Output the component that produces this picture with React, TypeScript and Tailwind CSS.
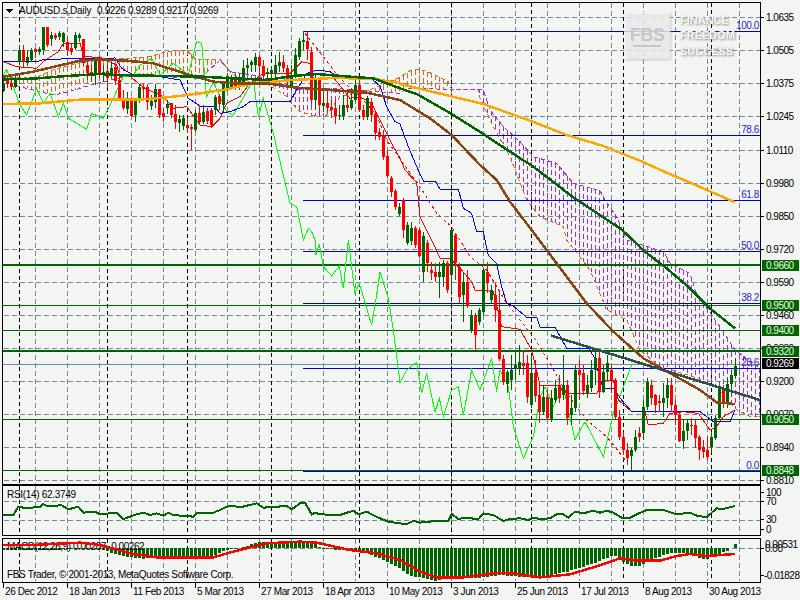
import React from 'react';

type Pt = number[];

// traced from 3x crops: ox/oy is the crop origin
const trace = (ox: number, oy: number, s: string): Pt[] =>
  s.trim().split(/\s+/).map((p) => {
    const [a, b] = p.split(',').map(Number);
    return [ox + a / 3, oy + b / 3];
  });
const pts = (l: Pt[]) => l.map((p) => p.join(',')).join(' ');
const yAt = (l: Pt[], x: number) => {
  if (x <= l[0][0]) return l[0][1];
  for (let i = 1; i < l.length; i++) {
    if (x <= l[i][0]) {
      const [x0, y0] = l[i - 1];
      const [x1, y1] = l[i];
      return y0 + ((y1 - y0) * (x - x0)) / (x1 - x0 || 1);
    }
  }
  return l[l.length - 1][1];
};

const orangeMa = trace(0, 0, '10,312 120,310 250,298 350,298 430,298 520,290 600,280 680,268 760,250 880,240 1000,234 1120,236 1200,250').concat(
  trace(400, 0, '0,252 150,288 250,312 390,362 500,405 610,438 720,482 800,518 880,552 1005,607'),
);
const greenMa = trace(0, 0, '10,238 100,236 200,228 300,222 350,225 500,228 600,230 700,235 800,240 880,228 950,222 1050,230 1120,235 1200,265').concat(
  trace(400, 0, '50,282 155,342 250,402 330,455 400,500 520,592 660,685 690,712'),
  trace(400, 240, '735,35 800,85 870,145 930,205 1005,265'),
);
const brownMa = trace(0, 0, '10,230 100,215 240,182 300,178 380,182 460,190 560,222 640,245 700,250 800,250 880,262 960,268 1100,278 1200,300').concat(
  trace(400, 0, '90,355 155,405 240,495 290,540 330,605 410,710'),
  trace(400, 240, '470,70 560,190 640,275 730,355 820,405 900,450 950,487 1005,492'),
);
const lime = trace(0, 0, '10,225 20,208 30,235 60,315 80,345 110,265 130,310 150,280 175,350 190,310 205,355 260,388 275,340 310,355 340,295 370,230 400,225 420,195 455,175 480,225 520,190 565,225 590,125 605,130 620,290 640,245 680,335 700,345 760,240 775,350 790,295 820,400 870,610 890,620 910,720 925,685 935,695 945,720').concat(
  trace(0, 240, '948,45 958,12 970,80 995,108 1018,78 1030,145 1045,0 1065,160 1078,130 1115,255 1130,165 1140,95 1165,175 1180,270 1200,430'),
  trace(400, 240, '20,390 50,367 65,460 80,400 105,515 118,475 130,530 155,450 175,440 190,525 215,390 240,450 275,355 290,455 300,390 325,440 340,560 370,655 400,590 420,470 435,440 460,500 490,440 525,600 555,545 610,650 640,520 655,480 695,375'),
);
const blue = trace(0, 0, '10,184 115,184 130,178 345,174 365,205 400,225 480,230 540,240 565,295 600,318 645,318 660,340 690,335 730,320 750,305 870,305 890,270 920,220 950,210 990,215 1020,232 1110,232 1140,258 1160,320 1185,365 1200,372').concat(
  trace(400, 0, '25,440 50,500 70,543 105,543 120,567 175,567 190,625 215,640 230,695 250,695 255,720'),
  trace(400, 240, '265,45 290,72 305,140 320,190 340,198 380,232 410,232 420,262 465,262 500,325 565,325 585,355 590,380 610,445 640,445 665,480 695,515 900,515 940,545 990,545 1005,510'),
);
const red = trace(0, 0, '10,185 50,200 110,205 130,185 175,155 190,130 240,130 250,170 300,172 350,195 360,230 385,225 430,262 490,290 520,325 560,320 600,375 635,380 660,355 680,310 720,290 750,250 790,220 870,220 905,185 930,190 940,235 1000,232 1050,295 1080,290 1115,310 1150,380 1180,440 1200,475').concat(
  trace(400, 0, '15,510 50,548 60,650 95,720'),
  trace(400, 240, '120,55 150,55 180,85 215,125 225,150 250,150 280,155 305,260 360,268 395,330 420,435 470,435 500,460 590,460 610,420 640,420 655,480 695,515 735,515 745,555 790,550 810,520 850,515 895,520 930,570 950,560 970,530 1005,510'),
);
const redDash = trace(0, 0, '915,100 970,170 1020,235 1090,300 1130,345 1160,420 1195,470').concat(
  trace(400, 0, '60,560 110,640 155,680'),
  trace(400, 240, '210,50 260,90 320,190 400,290 450,370 500,460 560,540 620,590 680,665'),
);
const spanA = trace(0, 0, '10,230 100,235 160,210 230,190 300,180 450,170 500,155 560,150 590,180 660,178 690,215 720,240 800,250 860,290 875,310 900,335 950,350 980,345 1020,290 1060,280 1110,270').concat(
  trace(400, 0, '0,232 30,212 60,208 100,222 145,245 155,268 235,268 240,295 280,380 330,470 380,600 420,650 490,680 500,720'),
  trace(400, 240, '570,90 620,210 680,240 720,330 780,380 880,410 950,440 1010,510 1050,530 1080,530'),
);
const spanB = trace(0, 0, '10,240 60,260 160,285 190,280 290,250 400,225 600,235 660,180 690,215 760,225 860,255 890,268 1000,265 1200,280').concat(
  trace(400, 0, '20,265 155,268 240,268 250,270 270,330 310,380 360,425 400,470 470,490 520,550 600,572 615,600 650,650 680,720'),
  trace(400, 240, '790,35 810,70 870,100 885,150 900,175 970,275 1005,330 1080,385'),
);
const rsi = trace(0, 470, '10,135 40,135 55,110 80,115 120,110 130,102 140,108 185,106 205,118 235,110 250,128 285,125 300,133 350,128 370,147 410,133 430,128 450,135 470,130 490,137 505,128 520,135 580,140 590,130 640,128 660,120 680,110 700,108 720,112 770,100 790,113 860,108 875,118 900,100 915,98 925,115 935,133 945,128 960,133 1020,135 1060,122 1075,133 1100,125 1135,143 1165,155 1200,160').concat(
  trace(400, 470, '20,163 40,152 60,158 80,155 130,153 145,152 155,132 175,147 200,143 235,148 250,130 280,135 310,153 330,147 360,145 385,150 400,143 420,147 450,145 470,133 490,133 505,143 525,125 550,130 580,122 600,128 620,122 640,128 665,143 690,143 710,133 740,120 790,120 830,133 870,128 890,137 920,142 950,115 970,117 1005,108'),
);
const histo = trace(0, 470, '10,240 110,240 300,236 340,250 380,260 430,266 470,262 560,265 640,256 680,240 720,233 770,218 800,215 900,214 950,220 960,235 1020,240 1100,250 1150,270 1200,295').concat(
  trace(400, 470, '30,318 60,322 105,332 150,325 230,325 300,315 380,322 420,320 500,305 580,280 640,255 665,275 690,288 720,288 750,270 810,248 860,250 915,270 950,255 990,238 1005,222'),
);
const signal = trace(0, 470, '10,225 100,225 240,218 300,225 400,252 470,262 640,262 700,245 800,220 900,215 950,218 1050,240 1130,250 1200,270').concat(
  trace(400, 470, '60,305 110,322 190,322 300,308 350,312 420,322 510,313 580,292 660,265 720,272 780,272 830,258 870,252 920,258 1005,252'),
);

// kind, body top, body bottom, high, low (pixels)
const candles: [string, number, number, number, number][] = [
  ['g', 84, 91, 79, 92], ['r', 80, 84, 76, 88], ['r', 83, 87, 80, 90], ['g', 78, 87, 76, 88], ['g', 50, 62, 45, 65], ['r', 50, 62, 45, 68], ['g', 57, 63, 50, 66], ['g', 50, 60, 48, 62],
  ['r', 49, 52, 48, 58], ['g', 49, 52, 47, 55], ['g', 27, 50, 27, 55], ['r', 27, 45, 27, 47], ['g', 35, 39, 32, 46], ['r', 35, 38, 33, 40], ['g', 33, 37, 31, 40], ['g', 33, 42, 32, 47],
  ['r', 42, 50, 37, 56], ['r', 48, 52, 43, 55], ['g', 35, 48, 32, 50], ['g', 35, 38, 33, 42], ['r', 39, 63, 39, 66], ['r', 65, 73, 60, 80], ['r', 72, 75, 65, 82], ['g', 58, 73, 58, 85],
  ['r', 58, 73, 56, 78], ['g', 72, 75, 65, 82], ['r', 71, 78, 58, 88], ['g', 68, 75, 62, 78], ['r', 67, 81, 65, 85], ['r', 80, 99, 76, 100], ['r', 98, 108, 90, 110], ['g', 98, 109, 92, 114],
  ['r', 99, 116, 97, 117], ['g', 100, 115, 100, 122], ['g', 87, 100, 84, 103], ['r', 87, 89, 83, 100], ['r', 87, 102, 84, 110], ['g', 101, 106, 95, 110], ['g', 89, 102, 84, 108], ['r', 89, 115, 89, 118],
  ['r', 113, 117, 108, 122], ['g', 104, 108, 100, 114], ['r', 103, 115, 103, 118], ['r', 114, 122, 105, 129], ['g', 119, 123, 115, 132], ['g', 118, 126, 115, 130], ['r', 125, 128, 118, 133], ['r', 127, 129, 124, 150],
  ['g', 113, 130, 110, 132], ['r', 113, 122, 105, 125], ['g', 112, 122, 105, 124], ['r', 111, 121, 108, 124], ['r', 110, 125, 108, 128], ['g', 97, 110, 95, 115], ['r', 96, 104, 94, 110], ['g', 82, 105, 82, 112],
  ['g', 76, 89, 73, 91], ['g', 77, 87, 75, 90], ['r', 77, 87, 75, 90], ['g', 80, 87, 73, 90], ['g', 68, 83, 60, 86], ['g', 65, 68, 58, 74], ['g', 62, 65, 60, 72], ['g', 57, 65, 53, 72],
  ['r', 57, 66, 55, 76], ['r', 66, 76, 60, 85], ['g', 72, 74, 68, 80], ['g', 70, 73, 66, 78], ['g', 65, 73, 55, 78], ['g', 62, 66, 52, 72], ['r', 62, 68, 55, 72], ['r', 68, 80, 65, 85],
  ['g', 75, 88, 65, 90], ['g', 55, 76, 48, 78], ['g', 41, 57, 38, 60], ['g', 40, 42, 31, 50], ['r', 41, 49, 31, 60], ['r', 52, 100, 47, 105], ['g', 80, 100, 75, 110], ['r', 80, 105, 78, 115],
  ['g', 103, 106, 88, 112], ['r', 103, 108, 90, 113], ['r', 107, 110, 100, 118], ['r', 108, 116, 100, 124], ['g', 115, 116, 105, 120], ['g', 105, 116, 95, 120], ['r', 105, 108, 90, 112], ['g', 100, 108, 90, 110],
  ['g', 85, 100, 80, 102], ['r', 85, 110, 80, 112], ['r', 110, 117, 105, 120], ['g', 98, 117, 96, 120], ['r', 102, 115, 98, 122], ['r', 114, 133, 112, 140], ['r', 132, 137, 128, 140], ['r', 135, 157, 130, 160],
  ['r', 156, 176, 150, 178], ['r', 178, 192, 176, 197], ['r', 191, 207, 189, 210], ['g', 207, 214, 203, 216],
  ['r', 200, 230, 198, 238], ['g', 225, 243, 222, 245], ['g', 228, 241, 222, 245], ['r', 228, 245, 226, 248], ['r', 230, 256, 228, 258], ['g', 236, 272, 232, 282], ['r', 243, 263, 240, 272], ['r', 270, 273, 262, 280],
  ['r', 272, 277, 263, 282], ['g', 272, 277, 262, 298], ['g', 263, 277, 260, 287], ['r', 263, 290, 261, 293], ['g', 230, 275, 230, 292], ['r', 235, 263, 233, 280], ['r', 267, 297, 263, 303], ['g', 282, 295, 273, 322],
  ['r', 282, 306, 270, 308], ['g', 315, 330, 310, 333], ['r', 315, 335, 313, 350], ['g', 310, 322, 308, 325], ['g', 270, 312, 268, 315], ['r', 272, 283, 262, 293], ['g', 290, 300, 285, 303], ['r', 295, 310, 283, 322],
  ['r', 310, 359, 292, 361], ['r', 359, 382, 355, 385], ['g', 372, 384, 370, 393], ['g', 370, 380, 355, 390], ['g', 365, 369, 352, 380], ['g', 362, 369, 345, 375], ['r', 363, 366, 350, 375], ['r', 363, 397, 355, 403],
  ['g', 373, 405, 355, 408], ['r', 373, 396, 360, 402], ['r', 395, 412, 385, 423], ['g', 397, 412, 385, 415], ['r', 397, 418, 390, 420], ['g', 398, 420, 390, 422], ['g', 388, 400, 380, 403], ['r', 385, 398, 375, 403],
  ['g', 385, 395, 355, 400], ['r', 385, 418, 380, 425], ['g', 408, 415, 395, 425], ['g', 370, 408, 365, 412], ['r', 370, 375, 360, 400], ['r', 373, 391, 365, 395], ['g', 385, 393, 375, 398], ['g', 370, 388, 360, 392],
  ['g', 358, 370, 350, 385], ['r', 358, 392, 350, 398], ['g', 372, 392, 365, 393], ['g', 363, 372, 355, 380], ['r', 370, 380, 365, 393], ['r', 380, 417, 378, 420], ['r', 417, 437, 410, 440], ['r', 437, 450, 432, 455],
  ['r', 450, 458, 443, 465], ['g', 450, 456, 448, 470], ['g', 437, 450, 430, 452], ['r', 433, 437, 427, 442], ['g', 407, 433, 400, 440], ['g', 382, 407, 378, 410], ['r', 385, 398, 380, 405], ['r', 395, 405, 394, 413],
  ['r', 401, 403, 395, 412], ['g', 398, 403, 383, 417], ['g', 385, 398, 378, 408], ['r', 385, 405, 378, 412], ['r', 405, 415, 400, 425], ['r', 415, 441, 412, 442], ['g', 431, 441, 420, 449], ['g', 423, 431, 420, 440],
  ['r', 425, 426, 418, 435], ['r', 425, 438, 420, 448], ['r', 437, 450, 435, 460], ['r', 447, 452, 440, 458], ['r', 450, 457, 437, 460], ['g', 437, 447, 432, 452], ['g', 418, 438, 415, 440], ['g', 388, 418, 385, 420],
  ['r', 388, 403, 385, 408], ['g', 384, 403, 378, 408], ['g', 375, 384, 370, 395], ['g', 366, 376, 358, 378],
];

const grayX = Array.from({ length: 23 }, (_, i) => 35 + i * 32);
const blackX = [19, 107, 187, 271, 359, 451, 531, 623, 711];
const grayY = [17, 50, 83, 116, 150, 183, 216, 249, 282, 315, 348, 381, 414, 447, 480];
const hatchX = Array.from({ length: 190 }, (_, i) => 3 + i * 4);

const priceTicks = [
  ['1.0635', 17], ['1.0505', 50], ['1.0375', 83], ['1.0245', 116], ['1.0110', 150], ['0.9980', 183], ['0.9850', 216], ['0.9720', 249],
  ['0.9590', 282], ['0.9460', 315], ['0.9330', 348], ['0.9200', 381], ['0.9070', 414], ['0.8940', 447], ['0.8810', 480],
] as const;
const levels = [
  ['0.9660', 265, 2], ['0.9500', 305, 1], ['0.9400', 330, 1], ['0.9320', 351, 2], ['0.9050', 419, 1], ['0.8848', 470, 1],
] as const;
const fibs = [
  ['100.0', 31], ['78.6', 135], ['61.8', 200], ['50.0', 251], ['38.2', 303], ['23.6', 368], ['0.0', 471],
] as const;
const dates = ['26 Dec 2012', '18 Jan 2013', '11 Feb 2013', '5 Mar 2013', '27 Mar 2013', '18 Apr 2013', '10 May 2013', '3 Jun 2013', '25 Jun 2013', '17 Jul 2013', '8 Aug 2013', '30 Aug 2013'];

const label = 'text-[10px] tracking-[-0.5px] fill-black';

function Grid({ top, bottom }: { top: number; bottom: number }) {
  return (
    <g>
      {grayX.map((x) => (
        <line key={x} x1={x + 0.5} x2={x + 0.5} y1={top} y2={bottom} stroke="#778899" strokeDasharray="5 3" />
      ))}
      {blackX.map((x) => (
        <line key={x} x1={x + 0.5} x2={x + 0.5} y1={top} y2={bottom} stroke="#000" strokeDasharray="4 3" />
      ))}
    </g>
  );
}

function PriceChart() {
  return (
    <svg viewBox="3 3 757 481" className="block w-[757px] h-[481px]" shapeRendering="crispEdges">
      {grayY.map((y) => (
        <line key={y} x1={4} x2={760} y1={y + 0.5} y2={y + 0.5} stroke="#778899" strokeDasharray="5 3" />
      ))}
      <Grid top={3} bottom={484} />

      {/* cloud hatching, colour flips where the spans cross */}
      {hatchX.map((x) => {
        const a = yAt(spanA, x);
        const b = yAt(spanB, x);
        const y1 = Math.round(Math.min(a, b));
        const y2 = Math.round(Math.max(a, b));
        if (y2 - y1 < 3) return null;
        return (
          <line key={x} x1={x + 0.5} x2={x + 0.5} y1={y1} y2={y2} stroke={a < b ? '#d2691e' : '#9932cc'} strokeDasharray="5 3" />
        );
      })}
      <polyline points={pts(spanA)} fill="none" stroke="#d2691e" strokeDasharray="4 3" />
      <polyline points={pts(spanB)} fill="none" stroke="#9932cc" strokeDasharray="4 3" />

      {levels.map(([t, y, w]) => (
        <line key={t} x1={3} x2={760} y1={y + (w === 1 ? 0.5 : 0)} y2={y + (w === 1 ? 0.5 : 0)} stroke="#006400" strokeWidth={w} />
      ))}
      <line x1={3} x2={760} y1={364.5} y2={364.5} stroke="#778899" />
      {fibs.map(([t, y]) => (
        <line key={t} x1={303} x2={760} y1={y + 0.5} y2={y + 0.5} stroke="#0000cd" />
      ))}

      <polyline points={pts(lime)} fill="none" stroke="#00ff00" />
      <polyline points={pts(redDash)} fill="none" stroke="#ff0000" strokeDasharray="3 3" />
      <polyline points={pts(red)} fill="none" stroke="#ff0000" />
      <polyline points={pts(blue)} fill="none" stroke="#0000ff" />

      {candles.map(([k, t, b, h, l], i) => {
        const x = 3 + 4 * i;
        const c = k === 'g' ? '#006400' : '#ff0000';
        return (
          <g key={i} fill={c}>
            <rect x={x} y={h} width={1} height={l - h} />
            <rect x={x - 1} y={t} width={3} height={b - t} />
          </g>
        );
      })}

      <polyline points={pts(orangeMa)} fill="none" stroke="#ffa500" strokeWidth={2.5} />
      <polyline points={pts(brownMa)} fill="none" stroke="#8b4513" strokeWidth={2.5} />
      <polyline points={pts(greenMa)} fill="none" stroke="#006400" strokeWidth={2.5} />
      <line x1={551} y1={335.5} x2={760} y2={400} stroke="#2f4f4f" strokeWidth={2.5} />

      {fibs.map(([t, y]) => (
        <text key={t} x={759} y={y - 2} textAnchor="end" className="text-[10px] tracking-[-0.4px] fill-[#2a1fd0]">
          {t}
        </text>
      ))}

      {/* broker watermark */}
      <g>
        <rect x={624} y={12} width={46} height={47} fill="#ffffff" fillOpacity={0.6} className="[filter:drop-shadow(1px_1px_1px_#aaa)]" />
        <text x={647} y={41} textAnchor="middle" className="text-[18px] font-bold tracking-[-0.5px] fill-[#c4c8c6]">
          FBS
        </text>
        <rect x={633} y={45} width={28} height={2} fill="#c4c8c6" />
        {[['FINANCE', 24], ['FREEDOM', 39], ['SUCCESS', 55]].map(([t, y]) => (
          <text key={t} x={680} y={y} className="text-[11px] font-bold fill-[#f6f8f6] [filter:drop-shadow(1px_1px_1px_#888)]">
            {t}
          </text>
        ))}
      </g>

      <path d="M6 9h7l-3.5 4z" fill="#000" />
      <text x={19} y={14} className="text-[10px] tracking-[-0.2px] fill-black">
        AUDUSD.s,Daily
      </text>
      <text x={97} y={14} className="text-[10px] tracking-[-0.35px] fill-black">
        0.9226 0.9289 0.9217 0.9269
      </text>
    </svg>
  );
}

function PriceAxis() {
  return (
    <svg viewBox="761 2 39 483" className="block w-[39px] h-[483px]" shapeRendering="crispEdges">
      {priceTicks.map(([t, y]) => (
        <g key={t}>
          <line x1={761} x2={764} y1={y + 0.5} y2={y + 0.5} stroke="#000" />
          <text x={766} y={y + 4} className={label}>
            {t}
          </text>
        </g>
      ))}
      {levels.map(([t, y]) => (
        <g key={t}>
          <rect x={762} y={y - 5.5} width={37} height={11} fill="#006400" />
          <text x={766} y={y + 4} className="text-[10px] tracking-[-0.5px] fill-[#f0f8e8]">
            {t}
          </text>
        </g>
      ))}
      <rect x={762} y={358} width={37} height={11} fill="#000" />
      <text x={766} y={367} className="text-[10px] tracking-[-0.5px] fill-white">
        0.9269
      </text>
    </svg>
  );
}

function RsiChart() {
  return (
    <svg viewBox="3 486 757 49" className="block w-[757px] h-[49px]" shapeRendering="crispEdges">
      <line x1={4} x2={760} y1={501.5} y2={501.5} stroke="#778899" strokeDasharray="5 3" />
      <line x1={4} x2={760} y1={520.5} y2={520.5} stroke="#778899" strokeDasharray="5 3" />
      <Grid top={486} bottom={535} />
      <polyline points={pts(rsi)} fill="none" stroke="#006400" strokeWidth={2} />
      <text x={7} y={498} className="text-[10px] tracking-[-0.3px] fill-black">
        RSI(14) 62.3749
      </text>
    </svg>
  );
}

function RsiAxis() {
  return (
    <svg viewBox="761 485 39 51" className="block w-[39px] h-[51px]" shapeRendering="crispEdges">
      {[['100', 492], ['70', 501], ['30', 519], ['0', 529]].map(([t, y]) => (
        <g key={t}>
          <line x1={761} x2={764} y1={Number(y)} y2={Number(y)} stroke="#000" />
          <text x={766} y={Number(y) + 4} className={label}>
            {t}
          </text>
        </g>
      ))}
    </svg>
  );
}

function MacdChart() {
  return (
    <svg viewBox="3 539 757 42" className="block w-[757px] h-[42px]" shapeRendering="crispEdges">
      <line x1={4} x2={760} y1={548.5} y2={548.5} stroke="#778899" strokeDasharray="5 3" />
      <Grid top={539} bottom={581} />
      {candles.map((_, i) => {
        const x = 3 + 4 * i;
        const y = yAt(histo, x);
        return <rect key={i} x={x - 1} y={Math.min(y, 548)} width={3} height={Math.abs(y - 548)} fill="#006400" />;
      })}
      <text x={7} y={550} className="text-[10px] tracking-[-0.45px] fill-black">
        MACD(12,26,9) 0.00287 -0.00262
      </text>
      <polyline points={pts(signal)} fill="none" stroke="#ff0000" strokeWidth={2.5} />
      <text x={7} y={578} className="text-[10px] tracking-[-0.35px] fill-black">
        FBS Trader, © 2001-2013, MetaQuotes Software Corp.
      </text>
    </svg>
  );
}

function MacdAxis() {
  return (
    <svg viewBox="761 538 39 45" className="block w-[39px] h-[45px]" shapeRendering="crispEdges">
      <line x1={761} x2={764} y1={548} y2={548} stroke="#000" />
      <line x1={761} x2={764} y1={575} y2={575} stroke="#000" />
      <text x={765} y={548} className={label}>
        0.00531
      </text>
      <text x={765} y={552} className={label}>
        0.00
      </text>
      <text x={764} y={579} className={label}>
        -0.01828
      </text>
    </svg>
  );
}

export default function App() {
  return (
    <div className="w-[800px] h-[600px] overflow-hidden bg-[#f3f5f2] pt-[2px] pl-[2px] font-['Liberation_Sans',Arial,sans-serif]">
      <div className="flex h-[483px]">
        <div className="w-[759px] border border-black">
          <PriceChart />
        </div>
        <PriceAxis />
      </div>
      <div className="flex h-[51px]">
        <div className="w-[759px] border border-black">
          <RsiChart />
        </div>
        <RsiAxis />
      </div>
      <div className="flex h-[45px] mt-[2px]">
        <div className="w-[759px] border border-black">
          <MacdChart />
        </div>
        <MacdAxis />
      </div>
      <div className="flex pl-[1px] h-[17px]">
        {dates.map((d) => (
          <div key={d} className="flex w-[64px] shrink-0">
            <span className="w-px h-[5px] bg-black" />
            <span className="pl-px pt-[1px] text-[10px] leading-[15px] tracking-[-0.4px] text-black whitespace-nowrap">{d}</span>
          </div>
        ))}
      </div>
    </div>
  );
}
